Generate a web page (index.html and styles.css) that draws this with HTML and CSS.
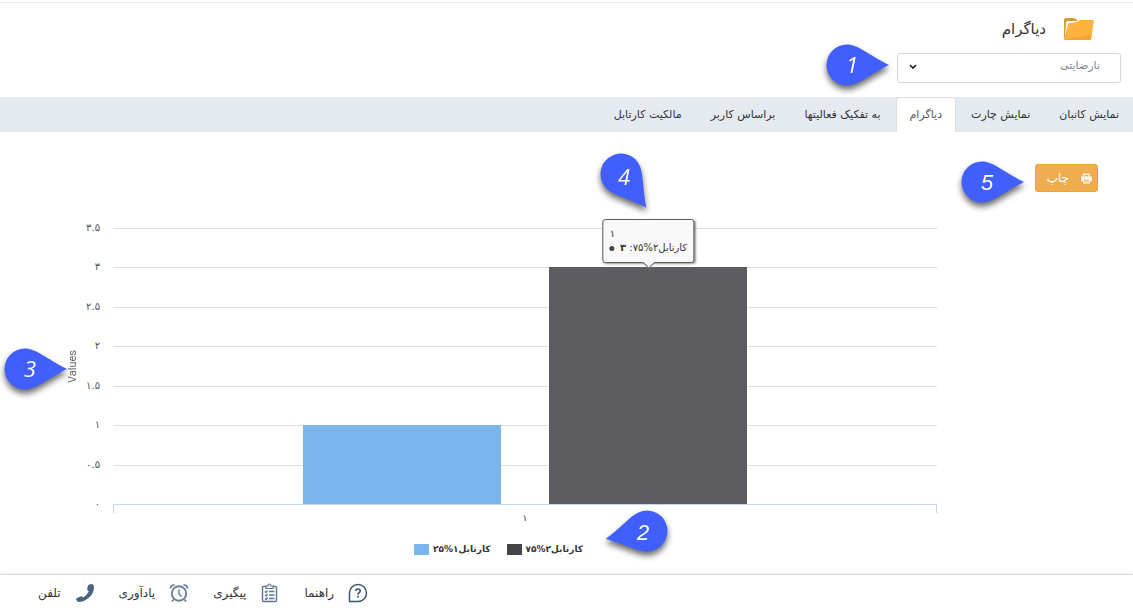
FILE: index.html
```html
<!DOCTYPE html>
<html lang="fa" dir="rtl">
<head>
<meta charset="utf-8">
<meta name="viewport" content="width=device-width, initial-scale=1">
<title>دیاگرام</title>
<link rel="stylesheet" href="styles.css">
</head>
<body>
<header class="header">
  <h1 class="title">
    <svg class="folder" viewBox="0 0 30 22" aria-hidden="true">
      <path d="M0 20V2Q0 0 3 0H9Q11 0 13 2L14 4H2L1 20Z" fill="#d99a35"/>
      <path d="M3 3H15V8L2 20L1 18Z" fill="#fff"/>
      <path d="M4 6Q4 5 6 5L13 4Q15 2 17 2H30L27 22L0 22Z" fill="#ffb23e"/>
      <path d="M1 21L27.500 17L27 22H0Z" fill="#f3a532"/>
    </svg>
    <span>دیاگرام</span>
  </h1>
  <div class="picker">
    <select class="picker-select" aria-label="فرآیند"><option>نارضایتی</option></select>
    <svg class="chevron" viewBox="0 0 8 6" aria-hidden="true"><path d="M1 1L4 4L7 1" fill="none" stroke="#222" stroke-width="1.7"/></svg>
    <svg class="marker marker-1" viewBox="-25 -25 72 56" aria-hidden="true">
      <path class="drop" d="M42 0C20-11 11-20.500 0-20.500A20.500 20.500 0 0 0 0 20.500C11 20.500 20 11 42 0Z"/>
      <text class="num num-open" x="5" y="8">1</text>
    </svg>
  </div>
</header>

<nav class="tabs">
  <a class="tab" href="#kanban">نمایش کانبان</a>
  <a class="tab" href="#chart">نمایش چارت</a>
  <a class="tab tab-active" href="#diagram" aria-current="page">دیاگرام</a>
  <a class="tab" href="#activities">به تفکیک فعالیتها</a>
  <a class="tab" href="#user">براساس کاربر</a>
  <a class="tab" href="#owner">مالکیت کارتابل</a>
</nav>

<main class="main" id="diagram">
  <div class="tools">
    <button class="print" type="button">
      <svg class="print-icon" viewBox="0 0 10 10" aria-hidden="true">
        <path d="M2.500 3V1H7.500V3" fill="none" stroke="#fff"/>
        <path d="M1 3H9Q10 3 10 4V7.500H0V4Q0 3 1 3Z" fill="#fff" opacity=".85"/>
        <path d="M2.500 5.500H7.500V9H2.500Z" fill="#f0ad4e" stroke="#fff"/>
        <path d="M3.500 7.300H6.500" stroke="#fff" stroke-width=".7"/>
      </svg>
      <span>چاپ</span>
    </button>
    <svg class="marker marker-5" viewBox="-25 -25 72 56" aria-hidden="true">
      <path class="drop" d="M42 0C20-11 11-20.500 0-20.500A20.500 20.500 0 0 0 0 20.500C11 20.500 20 11 42 0Z"/>
      <text class="num" x="5" y="8">5</text>
    </svg>
  </div>

  <figure class="chart" dir="ltr">
    <div class="axis-title"><span>Values</span>
      <svg class="marker marker-3" viewBox="-25 -25 72 56" aria-hidden="true">
        <path class="drop" d="M42 0C20-11 11-20.500 0-20.500A20.500 20.500 0 0 0 0 20.500C11 20.500 20 11 42 0Z"/>
        <text class="num num-open" x="5" y="8">3</text>
      </svg>
    </div>
    <div class="scale">
      <span>۳.۵</span><span>۳</span><span>۲.۵</span><span>۲</span><span>۱.۵</span><span>۱</span><span>۰.۵</span><span>۰</span>
    </div>
    <div class="plot">
      <div class="lines"><i></i><i></i><i></i><i></i><i></i><i></i><i></i></div>
      <div class="bars">
        <div class="bar bar-blue" style="height:28.500%"></div>
        <div class="bar bar-dark" style="height:85.700%">
          <div class="tooltip">
            <div>۱</div>
            <div dir="rtl">کارتابل۲%۷۵: <b>۳</b> <span class="dot"></span></div>
          </div>
          <svg class="marker marker-4" viewBox="-25 -25 60 66" aria-hidden="true">
            <path class="drop" transform="rotate(53)" d="M42 0C20-11 11-20.500 0-20.500A20.500 20.500 0 0 0 0 20.500C11 20.500 20 11 42 0Z"/>
            <text class="num num-open" x="3" y="11">4</text>
          </svg>
        </div>
      </div>
    </div>
    <div class="category">۱</div>
    <figcaption class="legend">
      <span class="key"><i class="swatch swatch-blue"></i><b dir="rtl">کارتابل۱%۲۵</b></span>
      <span class="key"><i class="swatch swatch-dark"></i><b dir="rtl">کارتابل۲%۷۵</b>
        <svg class="marker marker-2" viewBox="-45 -25 72 56" aria-hidden="true">
          <path class="drop" transform="rotate(169)" d="M42 0C20-11 11-20.500 0-20.500A20.500 20.500 0 0 0 0 20.500C11 20.500 20 11 42 0Z"/>
          <text class="num" x="-4" y="9">2</text>
        </svg>
      </span>
    </figcaption>
  </figure>
</main>

<footer class="footer">
  <a class="link" href="#help">
    <svg class="icon" viewBox="0 0 20 20" aria-hidden="true">
      <path d="M1.500 18.500V10A8.500 8.500 0 1 1 10 18.500Z" fill="none" stroke="#3d546e" stroke-width="1.500" stroke-linejoin="round"/>
      <path d="M7.800 8Q7.800 6 10 6T12.200 8Q12.200 9.200 11 9.800Q10 10.300 10 11.700" fill="none" stroke="#3d546e" stroke-width="1.600"/>
      <circle cx="10" cy="13.800" r="1" fill="#3d546e"/>
    </svg><span>راهنما</span></a>
  <a class="link" href="#track">
    <svg class="icon" viewBox="0 0 20 20" aria-hidden="true" fill="none" stroke="#5f7590">
      <path d="M6 3.500H3.500Q2.500 3.500 2.500 4.500V17.500Q2.500 18.500 3.500 18.500H15.500Q16.500 18.500 16.500 17.500V4.500Q16.500 3.500 15.500 3.500H13" stroke-width="1.400"/>
      <path d="M6 5.500V3H8Q8 1 9.500 1T11 3H13V5.500Z" stroke-width="1.200"/>
      <path d="M5 8.500L6 9.500L7.500 7.500M5 12L6 13L7.500 11M5 15.500L6 16.500L7.500 14.500M9 8.500H14.500M9 12H14.500M9 15.500H14.500" stroke-width="1.300"/>
    </svg><span>پیگیری</span></a>
  <a class="link" href="#remind">
    <svg class="icon" viewBox="0 0 20 20" aria-hidden="true" fill="none" stroke="#6b7e97">
      <circle cx="10" cy="10.500" r="7.200" stroke-width="1.900"/>
      <path d="M10 6.500V11L12.500 13.500" stroke-width="1.500"/>
      <path d="M1.500 5.500Q1.500 2 5.500 1.800M18.500 5.500Q18.500 2 14.500 1.800M4.500 16.500L3 18.500M15.500 16.500L17 18.500" stroke-width="1.800"/>
    </svg><span>یادآوری</span></a>
  <a class="link" href="#phone">
    <svg class="icon" viewBox="0 0 20 20" aria-hidden="true">
      <path d="M14 1.500L17 1Q19 1.500 19 5Q18.500 11 13.500 15Q9 18.800 4 19Q2 19 1 16.500Q1 15.500 2 15L6 13.200Q7 13 7.500 13.800L8.200 14.600Q12 12 13.800 8.200L12.800 7.500Q12 7 12.200 6L13 2.500Z" fill="#4d6480"/>
    </svg><span>تلفن</span></a>
</footer>
</body>
</html>
```
FILE: styles.css
```css
* { box-sizing: border-box; }

body {
  margin: 0;
  min-height: 100vh;
  display: flex;
  flex-direction: column;
  background: #fff;
  color: #333;
  font: 11px/16px "DejaVu Sans", sans-serif;
}

a { color: inherit; text-decoration: none; }

.header {
  margin-top: 2px;
  border-top: 1px solid #eee;
  padding: 10px 12px 14px;
}

.title {
  margin: 0 0 8px;
  padding-right: 27px;
  display: flex;
  align-items: center;
  gap: 18px;
  font-size: 15px;
  line-height: 32px;
  font-weight: 400;
}

.folder { width: 30px; height: 22px; }

.picker { position: relative; width: 224px; }

.picker-select {
  display: block;
  width: 100%;
  height: 30px;
  padding: 0 20px 4px;
  appearance: none;
  border: 1px solid #d5d8dc;
  border-radius: 3px;
  background: #fff;
  color: #7e8595;
  font: inherit;
}

.chevron {
  position: absolute;
  left: 12px;
  top: 11px;
  width: 8px;
  height: 6px;
  pointer-events: none;
}

.marker {
  position: absolute;
  z-index: 2;
  width: 72px;
  height: 56px;
  overflow: visible;
  pointer-events: none;
  filter: drop-shadow(0 4px 3px rgba(0, 0, 0, .6));
}

.marker-1 { right: 227px; top: -13px; }
.marker-2 { left: 95px; top: -35px; }
.marker-3 { left: 0; top: 116px; }
.marker-4 { width: 60px; height: 66px; left: 47px; bottom: calc(100% + 52px); }
.marker-5 { right: 104px; top: 25px; }

.drop { fill: #415eff; }

.num {
  fill: #fff;
  font: italic 22px "Liberation Sans", sans-serif;
  text-anchor: middle;
  direction: ltr;
}

.num-open { font-family: "Open Sans", sans-serif; }

.tabs {
  display: flex;
  gap: 1px;
  height: 35px;
  padding-right: 0;
  background: #e5eaf1;
}

.tab {
  padding: 10px 14px 8px;
  white-space: nowrap;
}

.tab-active {
  border: 1px solid #ddd;
  border-bottom: 0;
  border-radius: 4px 4px 0 0;
  padding: 9px 13px 8px;
  background: #fff;
  color: #555;
}

.main {
  flex: 1;
  display: flex;
}

.tools {
  position: relative;
  flex: 0 0 136px;
  padding: 32px 35px 0 0;
}

.print {
  display: flex;
  align-items: center;
  gap: 12px;
  width: 63px;
  height: 28px;
  padding: 0 5px;
  border: 1px solid #eea236;
  border-radius: 3px;
  background: #f0ad4e;
  color: #fff;
  font: inherit;
  font-size: 12px;
}

.print-icon { width: 11px; height: 11px; flex: none; }

.chart {
  flex: 1;
  margin: 0;
  padding-top: 96px;
  display: grid;
  grid-template-columns: 79px 34px 1fr 60px;
  grid-template-rows: 276px 26px auto;
  align-content: start;
}

.axis-title {
  position: relative;
  display: flex;
  align-items: center;
  justify-content: flex-end;
  font: 11px/13px Roboto, sans-serif;
  color: #666;
}

.axis-title span { writing-mode: vertical-rl; transform: rotate(180deg); }

.scale {
  display: flex;
  flex-direction: column;
  justify-content: space-between;
  margin: -8px 0;
  padding-right: 13px;
  text-align: right;
  font-size: 10px;
  white-space: nowrap;
  color: #555;
}

.plot { display: grid; }
.lines, .bars { grid-area: 1 / 1; }

.lines {
  display: flex;
  flex-direction: column;
}

.lines i { flex: 1; border-top: 1px solid #e0e0e0; }

.bars {
  display: flex;
  align-items: flex-end;
  gap: 11%;
  padding: 0 23%;
}

.bar { flex: 1; position: relative; }
.bar-blue, .swatch-blue { background: #7cb5ec; }
.bar-dark { background: #5d5d61; }
.swatch-dark { background: #434348; }

.tooltip {
  position: absolute;
  left: 50%;
  bottom: calc(100% + 4px);
  transform: translateX(-50%);
  padding: 7px 6px;
  border: 1px solid #5d5d61;
  border-radius: 3px;
  background: #f9f9f9;
  box-shadow: 1px 1px 2px rgba(0, 0, 0, .4);
  font-size: 10px;
  line-height: 14px;
  white-space: nowrap;
}

.tooltip::after {
  content: "";
  position: absolute;
  left: 50%;
  bottom: -5px;
  width: 8px;
  height: 8px;
  margin-left: -4px;
  transform: rotate(45deg);
  border: solid #5d5d61;
  border-width: 0 1px 1px 0;
  background: #f9f9f9;
}

.dot {
  display: inline-block;
  width: 5px;
  height: 5px;
  margin-right: 2px;
  border-radius: 50%;
  background: #434348;
  vertical-align: middle;
}

.category {
  grid-column: 3;
  height: 9px;
  border: 1px solid #c8d6e5;
  border-bottom: 0;
  padding-top: 5px;
  text-align: center;
  font-size: 9px;
}

.legend {
  grid-column: 1 / -1;
  padding-top: 11px;
  display: flex;
  justify-content: center;
  gap: 16px;
  font-size: 9px;
}

.key {
  position: relative;
  display: flex;
  align-items: center;
  gap: 4px;
}

.swatch { width: 15px; height: 11px; }

.footer {
  display: flex;
  justify-content: flex-end;
  gap: 24px;
  height: 37px;
  padding-left: 38px;
  border-top: 1px solid #ddd;
  box-shadow: 0 -1px 2px rgba(0, 0, 0, .08);
}

.link {
  display: flex;
  align-items: center;
  gap: 14px;
  font-size: 12px;
}

.icon { width: 20px; height: 20px; }
```
